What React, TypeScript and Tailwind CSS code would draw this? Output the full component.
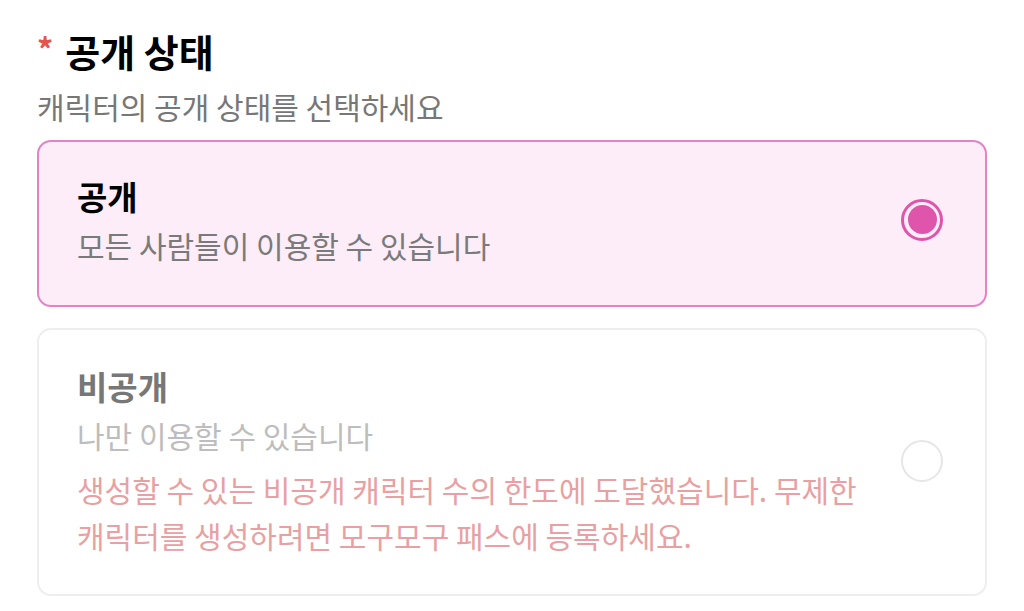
import React, { useState } from 'react';

const font = { fontFamily: '"Noto Sans CJK KR", "Noto Sans", sans-serif' };

type Option = {
    id: string;
    title: string;
    desc: string;
    warning?: string;
    disabled?: boolean;
};

const options: Option[] = [
    { id: 'public', title: '공개', desc: '모든 사람들이 이용할 수 있습니다' },
    {
        id: 'private',
        title: '비공개',
        desc: '나만 이용할 수 있습니다',
        warning: '생성할 수 있는 비공개 캐릭터 수의 한도에 도달했습니다. 무제한 캐릭터를 생성하려면 모구모구 패스에 등록하세요.',
        disabled: true,
    },
];

const App: React.FC = () => {
    const [selected, setSelected] = useState('public');

    return (
        <div className="min-h-screen bg-white px-[37px] pt-[27px]" style={font}>
            {/* Header */}
            <div className="flex items-center gap-[12px]">
                <span className="text-[32px] font-bold text-[#e5534b] leading-none mt-[-6px]">*</span>
                <h2 className="text-[38px] font-bold text-black leading-[48px]">공개 상태</h2>
            </div>
            <p className="text-[30px] text-[#777777] leading-[40px] mt-[11px]">캐릭터의 공개 상태를 선택하세요</p>

            {/* Options */}
            <div className="mt-[14px] flex flex-col gap-[21px]">
                {options.map(opt => {
                    const active = selected === opt.id;
                    return (
                        <button
                            key={opt.id}
                            type="button"
                            onClick={() => !opt.disabled && setSelected(opt.id)}
                            className={`flex items-center justify-between text-left rounded-[14px] border-2 pl-[38px] pr-[42px] ${
                                active ? 'border-[#e283c6] bg-[#fcedf8]' : 'border-[#eeeeee] bg-white'
                            } ${opt.warning ? 'pt-[34px] pb-[36px]' : 'pt-[32px] pb-[40px]'}`}
                        >
                            <div className="flex-1">
                                <p className={`text-[33px] font-bold leading-[44px] ${opt.disabled ? 'text-[#777777]' : 'text-black'}`}>
                                    {opt.title}
                                </p>
                                <p className={`text-[30px] leading-[40px] mt-[7px] ${opt.disabled ? 'text-[#bdbdbd]' : 'text-[#7a7a7a]'}`}>
                                    {opt.desc}
                                </p>
                                {opt.warning && (
                                    <p className="text-[30px] leading-[46px] mt-[11px] text-[#e9a0a2] max-w-[820px] break-keep">
                                        {opt.warning}
                                    </p>
                                )}
                            </div>
                            {active ? (
                                <span className="w-[42px] h-[42px] rounded-full border-[3px] border-[#e055ac] flex items-center justify-center">
                                    <span className="w-[29px] h-[29px] rounded-full bg-[#e055ac]" />
                                </span>
                            ) : (
                                <span className="w-[42px] h-[42px] rounded-full border-2 border-[#e6e6e6] bg-white" />
                            )}
                        </button>
                    );
                })}
            </div>
        </div>
    );
};

export default App;
